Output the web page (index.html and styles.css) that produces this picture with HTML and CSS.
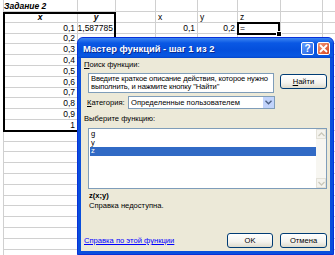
FILE: index.html
```html
<!DOCTYPE html>
<html lang="ru">
<head>
    <meta charset="UTF-8">
    <title>Мастер функций</title>
    <link rel="stylesheet" href="styles.css">
</head>
<body>

<!-- worksheet: gridlines are painted by the container, cells are placed by row/column class -->
<div class="sheet">
    <div class="cell r1 span-ab task">Задание 2</div>

    <div class="box"></div>
    <div class="cell r2 ca head">x</div>
    <div class="cell r2 cb head">y</div>
    <div class="cell r2 cd">x</div>
    <div class="cell r2 ce">y</div>
    <div class="cell r2 cf">z</div>

    <div class="cell r3 ca num">0,1</div>
    <div class="cell r3 cb num">1,587785</div>
    <div class="cell r3 cd num">0,1</div>
    <div class="cell r3 ce num">0,2</div>
    <div class="cell r3 cf active">=</div>

    <div class="cell r4 ca num">0,2</div>
    <div class="cell r5 ca num">0,3</div>
    <div class="cell r6 ca num">0,4</div>
    <div class="cell r7 ca num">0,5</div>
    <div class="cell r8 ca num">0,6</div>
    <div class="cell r9 ca num">0,7</div>
    <div class="cell r10 ca num">0,8</div>
    <div class="cell r11 ca num">0,9</div>
    <div class="cell r12 ca num">1</div>
</div>

<!-- Function wizard dialog, floats over the sheet -->
<div class="dialog">
    <div class="titlebar">
        <span class="caption">Мастер функций - шаг 1 из 2</span>
        <span class="tbtn help">?</span>
        <span class="tbtn close">
            <svg width="9" height="9" viewBox="0 0 9 9"><path d="M1 1 L8 8 M8 1 L1 8" stroke="#fff" stroke-width="1.8"/></svg>
        </span>
    </div>
    <div class="body">
        <div class="lbl"><u>П</u>оиск функции:</div>
        <div class="search-row">
            <div class="textbox">Введите краткое описание действия, которое нужно выполнить, и нажмите кнопку "Найти"</div>
            <span class="btn find"><u>Н</u>айти</span>
        </div>
        <div class="cat-row">
            <span class="cat-lbl"><u>К</u>атегория:</span>
            <div class="select">
                <span class="value">Определенные пользователем</span>
                <span class="arrow">
                    <svg width="7" height="5" viewBox="0 0 7 5"><path d="M0.5 0.8 L3.5 3.8 L6.5 0.8" fill="none" stroke="#4d6185" stroke-width="1.4"/></svg>
                </span>
            </div>
        </div>
        <div class="lbl pick">Выберите функцию:</div>
        <div class="listbox">
            <div class="items">
                <div class="item">g</div>
                <div class="item">y</div>
                <div class="item sel">z</div>
            </div>
            <div class="vscroll">
                <span class="sarrow">
                    <svg width="7" height="5" viewBox="0 0 7 5"><path d="M0.5 4 L3.5 1 L6.5 4" fill="none" stroke="#c9c7ba" stroke-width="1.3"/></svg>
                </span>
                <span class="sarrow">
                    <svg width="7" height="5" viewBox="0 0 7 5"><path d="M0.5 1 L3.5 4 L6.5 1" fill="none" stroke="#c9c7ba" stroke-width="1.3"/></svg>
                </span>
            </div>
        </div>
        <div class="fsig">z(x;y)</div>
        <div class="fdesc">Справка недоступна.</div>
        <div class="footer">
            <a class="help-link" href="#">Справка по этой функции</a>
            <span class="btn ok">OK</span>
            <span class="btn cancel">Отмена</span>
        </div>
    </div>
</div>

</body>
</html>
```

FILE: styles.css
```css
body {
    margin: 0;
    background-color: #fff;
    font-family: "Liberation Sans", Arial, sans-serif;
    overflow: hidden;
}

/* worksheet */
.sheet {
    display: grid;
    grid-template-columns: 74px 38px 40px 42px 40px 43px 42px 13px;
    grid-template-rows: 12px repeat(23, 10.8px);
    margin-left: 3px;
    width: 332px;
    font-size: 8.5px;
    color: #000;
    background-image:
        repeating-linear-gradient(to bottom, #d0d0d0 0 1px, transparent 1px 10.8px),
        linear-gradient(#d0d0d0, #d0d0d0),
        linear-gradient(#d0d0d0, #d0d0d0),
        linear-gradient(#d0d0d0, #d0d0d0),
        linear-gradient(#d0d0d0, #d0d0d0),
        linear-gradient(#d0d0d0, #d0d0d0),
        linear-gradient(#d0d0d0, #d0d0d0),
        linear-gradient(#d0d0d0, #d0d0d0),
        linear-gradient(#d0d0d0, #d0d0d0);
    background-size: 100% 100%, 1px 100%, 1px 100%, 1px 100%, 1px 100%, 1px 100%, 1px 100%, 1px 100%, 1px 100%;
    background-position: 0 11px, 0 0, 74px 0, 112px 0, 152px 0, 194px 0, 234px 0, 277px 0, 319px 0;
    background-repeat: no-repeat;
}
.r1 { grid-row: 1; }
.r2 { grid-row: 2; }
.r3 { grid-row: 3; }
.r4 { grid-row: 4; }
.r5 { grid-row: 5; }
.r6 { grid-row: 6; }
.r7 { grid-row: 7; }
.r8 { grid-row: 8; }
.r9 { grid-row: 9; }
.r10 { grid-row: 10; }
.r11 { grid-row: 11; }
.r12 { grid-row: 12; }
.ca { grid-column: 1; }
.cb { grid-column: 2; }
.cd { grid-column: 4; }
.ce { grid-column: 5; }
.cf { grid-column: 6; }
.span-ab { grid-column: 1 / 3; }

.cell {
    align-self: end;
    line-height: 9px;
    padding: 0 0 1px 3px;
    white-space: nowrap;
}
.task {
    padding-left: 1px;
    font-weight: bold;
    font-style: italic;
}
.head {
    padding-left: 0;
    text-align: center;
    font-weight: bold;
    font-style: italic;
}
.num {
    padding: 0 2px 1px 0;
    text-align: right;
}
.box {
    grid-column: 1 / 3;
    grid-row: 2 / 13;
    margin: 0 -1px -1px 0;
    border: 2px solid #000;
}
.active {
    align-self: stretch;
    position: relative;
    margin: -1px 0 -1px 0;
    border: 2px solid #000;
    padding: 0 0 0 1px;
    line-height: 9px;
}
.active::after {
    content: "";
    position: absolute;
    right: -4px;
    bottom: -4px;
    width: 4px;
    height: 4px;
    background: #000;
    border: 1px solid #fff;
}

/* dialog window */
.dialog {
    position: absolute;
    left: 77px;
    top: 37px;
    width: 257px;
    height: 218px;
    display: flex;
    flex-direction: column;
    background: #0a4fdc;
    border: 1px solid #0831d9;
    border-radius: 6px 6px 0 0;
    box-sizing: border-box;
    font-size: 7.6px;
}
.titlebar {
    height: 20px;
    display: flex;
    align-items: center;
    gap: 3px;
    padding: 0 3px 0 5px;
    background: linear-gradient(#3d86f2 0%, #0a58e4 25%, #044fdc 60%, #0857e2 90%, #0544c8 100%);
    border-radius: 5px 5px 0 0;
}
.caption {
    flex: 1;
    color: #fff;
    font-weight: bold;
    font-size: 9.4px;
    text-shadow: 1px 1px 0 #0a2a8f;
    white-space: nowrap;
}
.tbtn {
    width: 13px;
    height: 13px;
    border: 1px solid #fff;
    border-radius: 2px;
    box-sizing: border-box;
    display: flex;
    align-items: center;
    justify-content: center;
    color: #fff;
    font-weight: bold;
    font-size: 10px;
}
.help { background: linear-gradient(135deg, #5e9bff, #2563e0); }
.close { background: linear-gradient(135deg, #f29a7a, #d8431c); }

.body {
    flex: 1;
    margin: 0 3px 3px;
    background: #ece9d8;
    display: flex;
    flex-direction: column;
    padding: 1px 3px 3px 3px;
    color: #000;
}
.lbl {
    line-height: 10px;
    margin-top: 1px;
}
.search-row {
    display: flex;
    align-items: flex-start;
    margin-top: 3px;
    padding-left: 4px;
}
.textbox {
    width: 186px;
    height: 20px;
    box-sizing: border-box;
    background: #fff;
    border: 1px solid #7f9db9;
    padding: 1px 1px 1px 2px;
    line-height: 8px;
    letter-spacing: -0.15px;
}
.btn {
    height: 15px;
    box-sizing: border-box;
    border: 1px solid #003c74;
    border-radius: 3px;
    background: linear-gradient(#fff, #f4f3ee 60%, #dedbcd);
    display: flex;
    align-items: center;
    justify-content: center;
}
.find {
    width: 47px;
    margin-left: 6px;
    margin-top: 1px;
}
.cat-row {
    display: flex;
    align-items: center;
    margin-top: 3px;
    padding-left: 3px;
}
.cat-lbl { width: 41px; }
.select {
    width: 147px;
    height: 13px;
    box-sizing: border-box;
    background: #fff;
    border: 1px solid #7f9db9;
    display: flex;
    align-items: center;
}
.select .value {
    flex: 1;
    padding-left: 2px;
}
.arrow {
    width: 11px;
    height: 11px;
    background: #c1d3fb;
    display: flex;
    align-items: center;
    justify-content: center;
}
.pick { margin-top: 5px; }
.listbox {
    margin: 4px 0 0 4px;
    height: 61px;
    box-sizing: border-box;
    background: #fff;
    border: 1px solid #7f9db9;
    display: flex;
}
.items {
    flex: 1;
    padding: 1px 0 0 1px;
}
.item {
    height: 8.5px;
    line-height: 8.5px;
    padding-left: 1px;
}
.item.sel {
    background: #316ac5;
    color: #fff;
}
.vscroll {
    width: 10px;
    background: #f7f6f1;
    display: flex;
    flex-direction: column;
    justify-content: space-between;
}
.sarrow {
    height: 10px;
    background: #f4f3ee;
    border: 1px solid #e3e1d8;
    box-sizing: border-box;
    display: flex;
    align-items: center;
    justify-content: center;
}
.fsig {
    font-weight: bold;
    margin: 2px 0 0 5px;
    line-height: 10px;
}
.fdesc {
    margin-left: 5px;
    line-height: 10px;
}
.footer {
    margin-top: auto;
    display: flex;
    align-items: center;
    gap: 7px;
}
.help-link {
    flex: 1;
    color: #0000ff;
    text-decoration: underline;
}
.ok { width: 46px; }
.cancel { width: 47px; }
```
